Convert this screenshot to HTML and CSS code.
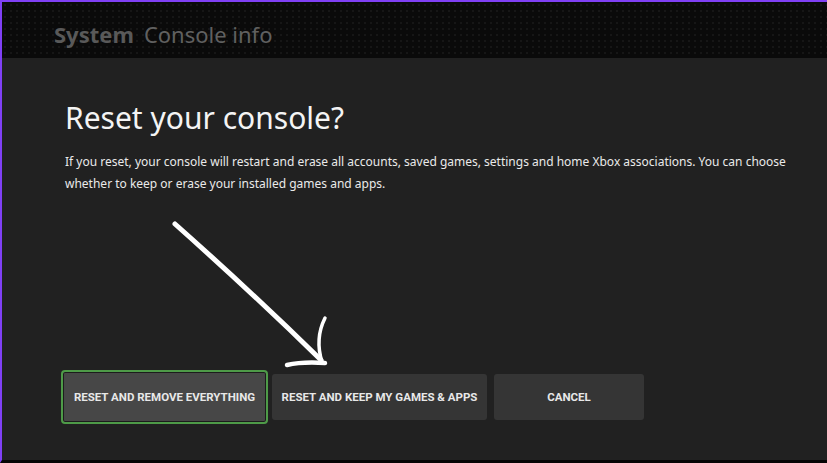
FILE: index.html
```html
<!DOCTYPE html>
<html lang="en">
<head>
  <meta charset="UTF-8">
  <meta name="viewport" content="width=device-width, initial-scale=1.0">
  <title>Console info - Reset</title>
  <link rel="stylesheet" href="styles.css">
</head>
<body>

  <div class="screen">
    <header class="top-bar">
      <span class="crumb-main">System</span>
      <span class="crumb-sub">Console info</span>
    </header>

    <main class="dialog">
      <h1 class="dialog-title">Reset your console?</h1>
      <p class="dialog-text">If you reset, your console will restart and erase all accounts, saved games, settings and home Xbox associations. You can choose whether to keep or erase your installed games and apps.</p>

      <div class="actions">
        <button class="btn btn-focused">Reset and remove everything</button>
        <button class="btn btn-keep">Reset and keep my games &amp; apps</button>
        <button class="btn btn-cancel">Cancel</button>
      </div>

      <!-- flecha desenhada por cima -->
      <svg class="arrow" width="175" height="160" viewBox="0 0 175 160">
        <path d="M15 10 C 60 50, 112 98, 161 146" fill="none" stroke="#fff" stroke-width="5" stroke-linecap="round"/>
        <path d="M165 104 C 158 118, 157 132, 162 148" fill="none" stroke="#fff" stroke-width="3.5" stroke-linecap="round"/>
        <path d="M127 151 C 140 148, 150 148, 165 149" fill="none" stroke="#fff" stroke-width="4.5" stroke-linecap="round"/>
      </svg>
    </main>
  </div>

</body>
</html>
```

FILE: styles.css
```css
body {
  margin: 0;
  padding: 0;
  background-color: #222;
  font-family: 'Noto Sans', 'Open Sans', sans-serif;
  overflow: hidden;
}

.screen {
  width: 827px;
  height: 463px;
  box-sizing: border-box;
  border-top: 2px solid #8040f5;
  border-left: 2px solid #8040f5;
  border-bottom: 3px solid #050505;
  background-color: #212121;
  display: flex;
  flex-direction: column;
}

.top-bar {
  height: 56px;
  box-sizing: border-box;
  padding: 8px 0 0 52px;
  display: flex;
  align-items: center;
  gap: 10px;
  background-color: #0a0a0a;
  background-image: radial-gradient(rgba(255, 255, 255, 0.05) 1px, transparent 1px);
  background-size: 6px 6px;
  font-size: 22px;
  color: #5c5c5c;
}

.crumb-main {
  font-weight: bold;
  color: #595959;
}

.crumb-sub {
  color: #606060;
}

.dialog {
  flex: 1;
  position: relative;
  padding: 0 0 0 63px;
  display: flex;
  flex-direction: column;
}

.dialog-title {
  margin: 40px 0 0 0;
  font-size: 30px;
  font-weight: normal;
  color: #f4f4f4;
  line-height: 40px;
}

.dialog-text {
  margin: 13px 0 0 0;
  width: 740px;
  font-size: 12px;
  line-height: 22px;
  color: #eaeaea;
}

.actions {
  margin-top: auto;
  margin-bottom: 36px;
  margin-left: -4px;
  display: flex;
  align-items: center;
}

.btn {
  height: 46px;
  border: none;
  border-radius: 3px;
  background-color: #353535;
  color: #e8e8e8;
  font-family: 'Roboto', sans-serif;
  font-weight: bold;
  font-size: 11.5px;
  text-transform: uppercase;
  cursor: pointer;
}

.btn-focused {
  width: 207px;
  height: 54px;
  border: 2px solid #4e9a48;
  box-shadow: inset 0 0 0 1px #1c1c1c;
  background-color: #474747;
  border-radius: 4px;
}

.btn-keep {
  width: 215px;
  margin-left: 4px;
}

.btn-cancel {
  width: 150px;
  margin-left: 7px;
}

.arrow {
  position: absolute;
  left: 158px;
  top: 156px;
}
```
